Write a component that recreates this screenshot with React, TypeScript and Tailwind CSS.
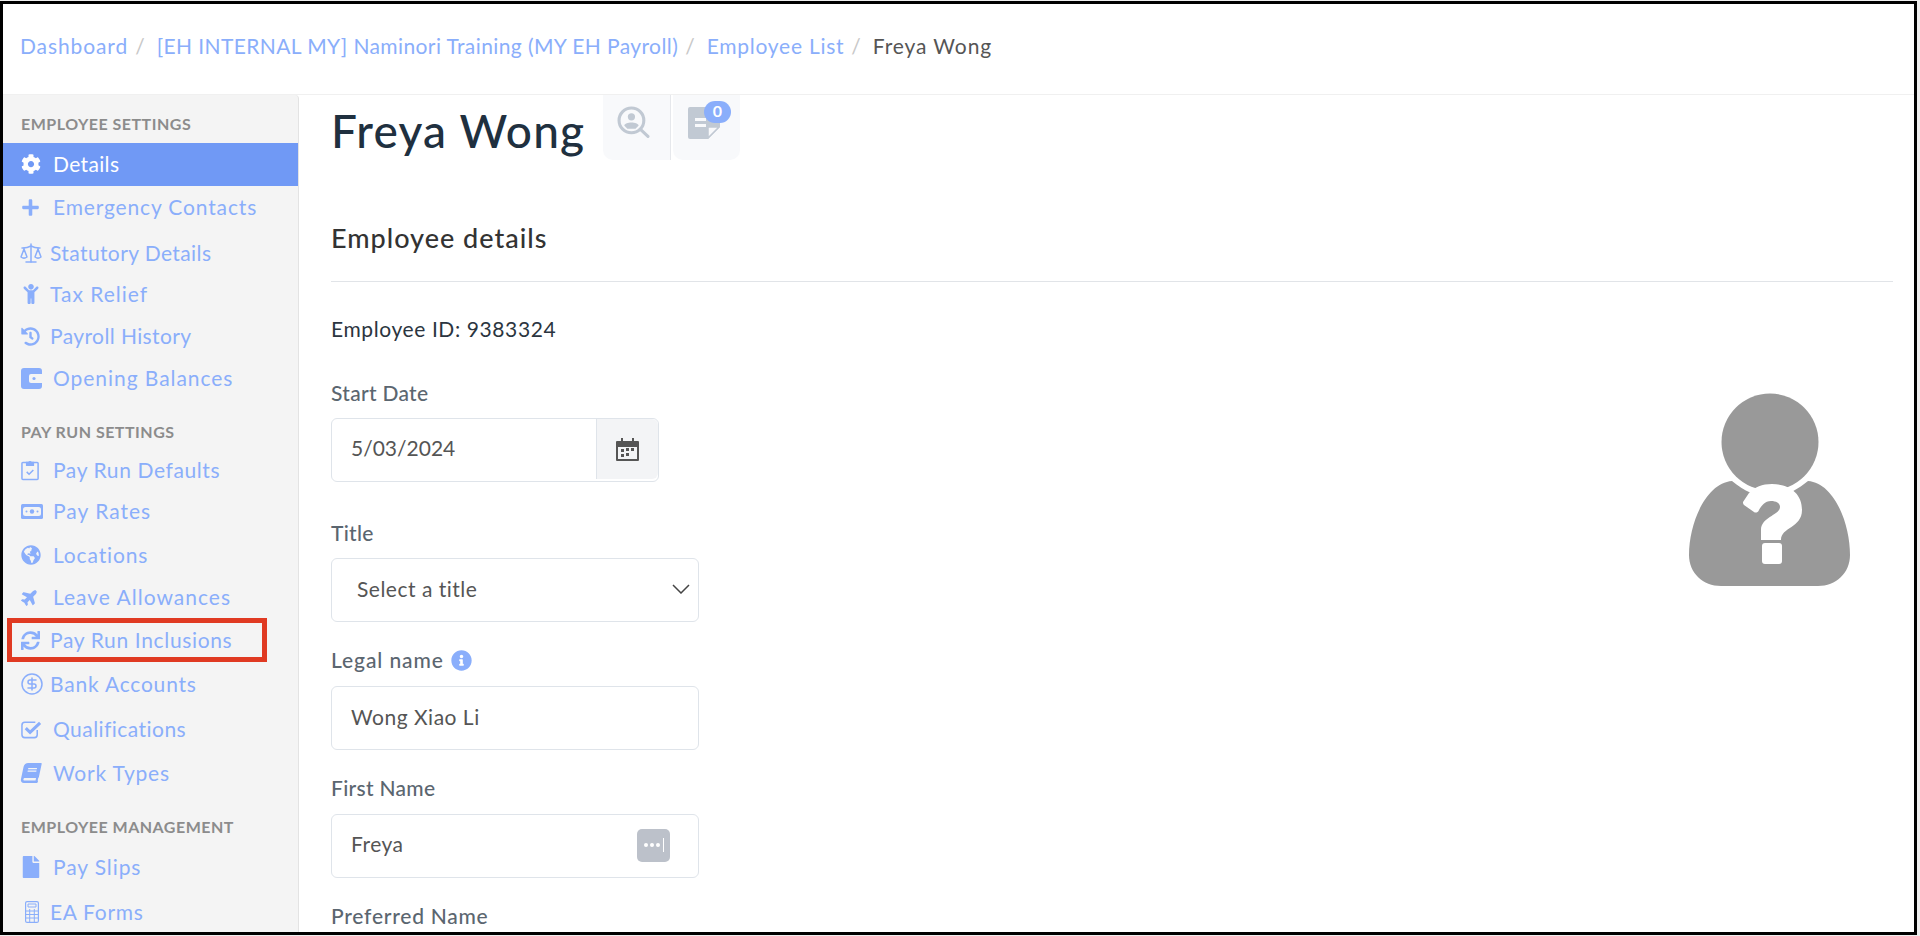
import * as React from "react"
import { FaCog, FaPlus, FaChild, FaHistory, FaGlobeAmericas, FaPlane, FaSync, FaBook, FaFile, FaInfoCircle } from "react-icons/fa"
import { CircleDollarSign, Scale } from "lucide-react"

function ClipboardIcon() {
  return (
    <svg viewBox="0 0 20 22" className="w-[19px] h-[22px]" fill="none" stroke="currentColor" strokeWidth="1.6">
      <rect x="1" y="3" width="17" height="18" rx="1" />
      <path d="M6 3h2a2 2 0 0 1 3 0h2v3H6z" fill="currentColor" />
      <path d="M6 13l2.500 2.500L13 11" />
    </svg>
  )
}

function BillIcon() {
  return (
    <svg viewBox="0 0 22 15" className="w-[22px] h-[15px]">
      <rect width="22" height="15" rx="1.500" fill="currentColor" />
      <rect x="2" y="3" width="18" height="9" rx="2.500" fill="#f4f4f4" />
      <circle cx="11" cy="7.500" r="2.200" fill="currentColor" />
      <circle cx="5.500" cy="7.500" r="1" fill="currentColor" />
      <circle cx="16.500" cy="7.500" r="1" fill="currentColor" />
    </svg>
  )
}

function WalletIcon() {
  return (
    <svg viewBox="0 0 22 21" className="w-[22px] h-[21px]">
      <rect width="21" height="21" rx="3" fill="currentColor" />
      <path d="M10 6h12v9H10a2 2 0 0 1-2-2V8a2 2 0 0 1 2-2z" fill="#f4f4f4" />
      <circle cx="13" cy="10.500" r="1.600" fill="currentColor" />
    </svg>
  )
}

function CheckIcon() {
  return (
    <svg viewBox="0 0 22 19" className="w-[21px] h-[19px]" fill="none" stroke="currentColor">
      <path d="M17 10v5a3 3 0 0 1-3 3H4a3 3 0 0 1-3-3V5a3 3 0 0 1 3-3h11" strokeWidth="1.600" />
      <path d="M5 8l4.500 4.500L20 2.500" strokeWidth="3.200" />
    </svg>
  )
}

function CalcIcon() {
  return (
    <svg viewBox="0 0 14 22" className="w-[14px] h-[22px]" fill="none" stroke="currentColor" strokeWidth="1.200">
      <rect x="0.600" y="0.600" width="12.800" height="20.800" rx="1.500" />
      <path d="M3 3h8v3H3z" strokeWidth="1" />
      <path d="M0.600 10h12.800M0.600 13.500h12.800M0.600 17h12.800M4.700 8v13M9.300 8v13" strokeWidth="1" />
    </svg>
  )
}

function CalendarIcon() {
  return (
    <svg viewBox="0 0 23 23" className="w-[23px] h-[23px] text-[#555]" fill="currentColor">
      <path d="M1 3h21a1 1 0 0 1 1 1v18a1 1 0 0 1-1 1H1a1 1 0 0 1-1-1V4a1 1 0 0 1 1-1zm1 6v12h19V9z" fillRule="evenodd" />
      <rect x="5" y="0" width="2" height="5" />
      <rect x="16" y="0" width="2" height="5" />
      <rect x="10" y="10" width="3" height="3" />
      <rect x="15" y="10" width="3" height="3" />
      <rect x="5" y="11" width="3" height="3" />
      <rect x="5" y="16" width="3" height="3" />
      <rect x="10" y="15" width="3" height="3" />
    </svg>
  )
}

interface NavItem {
  label: string
  icon: React.ReactNode
  row: string
  text: string
  active?: boolean
  marked?: boolean
}

const employeeSettings: NavItem[] = [
  { label: "Details", icon: <FaCog className="w-[20px] h-[20px]" />, row: "mt-[9px] h-[43px]", text: "ml-[12px] tracking-[0.35px]", active: true },
  { label: "Emergency Contacts", icon: <FaPlus className="w-[19px] h-[19px]" />, row: "mt-[5px] h-[34px]", text: "ml-[13px] tracking-[0.85px]" },
  { label: "Statutory Details", icon: <Scale className="w-[24px] h-[24px] -ml-[2px]" strokeWidth={1.5} />, row: "mt-[12px] h-[34px]", text: "ml-[7px] tracking-[0.4px]" },
  { label: "Tax Relief", icon: <FaChild className="w-[20px] h-[20px]" />, row: "mt-[7px] h-[34px]", text: "ml-[9px] tracking-[1px]" },
  { label: "Payroll History", icon: <FaHistory className="w-[19px] h-[19px]" />, row: "mt-[8px] h-[34px]", text: "ml-[10px] tracking-[0.4px]" },
  { label: "Opening Balances", icon: <WalletIcon />, row: "mt-[8px] h-[34px]", text: "ml-[10px] tracking-[0.95px]" },
]

const payRunSettings: NavItem[] = [
  { label: "Pay Run Defaults", icon: <ClipboardIcon />, row: "mt-[12px] h-[34px]", text: "ml-[13px] tracking-[0.6px]" },
  { label: "Pay Rates", icon: <BillIcon />, row: "mt-[7px] h-[34px]", text: "ml-[10px] tracking-[1px]" },
  { label: "Locations", icon: <FaGlobeAmericas className="w-[20px] h-[20px]" />, row: "mt-[10px] h-[34px]", text: "ml-[12px] tracking-[0.85px]" },
  { label: "Leave Allowances", icon: <FaPlane className="w-[18px] h-[18px] -rotate-45" />, row: "mt-[8px] h-[34px]", text: "ml-[14px] tracking-[1px]" },
  { label: "Pay Run Inclusions", icon: <FaSync className="w-[19px] h-[19px]" />, row: "mt-[9px] h-[34px]", text: "ml-[10px] tracking-[0.65px]", marked: true },
  { label: "Bank Accounts", icon: <CircleDollarSign className="w-[24px] h-[24px] -ml-[1px]" strokeWidth={1.5} />, row: "mt-[10px] h-[34px]", text: "ml-[6px] tracking-[0.8px]" },
  { label: "Qualifications", icon: <CheckIcon />, row: "mt-[11px] h-[34px]", text: "ml-[11px] tracking-[0.45px]" },
  { label: "Work Types", icon: <FaBook className="w-[20px] h-[20px] -skew-x-12" />, row: "mt-[10px] h-[34px]", text: "ml-[12px] tracking-[0.8px]" },
]

const employeeManagement: NavItem[] = [
  { label: "Pay Slips", icon: <FaFile className="w-[20px] h-[22px]" />, row: "mt-[14px] h-[34px]", text: "ml-[12px] tracking-[0.9px]" },
  { label: "EA Forms", icon: <span className="pl-[4px] block"><CalcIcon /></span>, row: "mt-[11px] h-[34px]", text: "ml-[11px] tracking-[0.7px]" },
]

function NavRow({ item }: { item: NavItem }) {
  return (
    <a
      className={`relative flex items-center pl-[18px] pb-[2px] text-[21px] shrink-0 ${item.row} ${
        item.active ? "bg-[#7099f5] text-white" : "text-[#8aaefb]"
      }`}
    >
      <span className="flex items-center">{item.icon}</span>
      <span className={item.text}>{item.label}</span>
      {item.marked && <span className="absolute left-[4px] top-[-6px] w-[260px] h-[44px] border-[5px] border-[#e03a22]" />}
    </a>
  )
}

function Field({ label, children, extra, spacing }: { label: string; children: React.ReactNode; extra?: React.ReactNode; spacing?: string }) {
  return (
    <div>
      <label className={`flex items-center gap-[7px] h-[24px] text-[21px] font-medium text-[#5b6670] ${spacing ?? "tracking-[0.3px]"}`}>
        {label}
        {extra}
      </label>
      {children}
    </div>
  )
}

const inputBox = "flex items-center h-[64px] pb-[2px] rounded-[6px] border border-[#dfe4ea] bg-white text-[21px] tracking-[0.5px] text-[#555]"
const sectionHead = "h-[20px] shrink-0 pl-[18px] text-[16px] leading-[20px] tracking-[0.5px] font-bold text-[#8c8c8c]"
const crumbLink = "text-[#8aaefb]"
const crumbSep = "ml-[7px] mr-[12px] text-[#c8c8c8]"

export default function App() {
  return (
    <div className="h-[936px] pt-px pr-[3px] pb-px bg-[#eeeeee]">
      <div className="h-full overflow-hidden flex flex-col border-[3px] border-black bg-white font-['Lato','Liberation_Sans',sans-serif]">
        <nav className="h-[91px] shrink-0 flex items-center pl-[17px] pb-[7px] text-[21px] border-b border-[#f0f0f0]">
          <a className={`${crumbLink} tracking-[0.9px]`}>Dashboard</a>
          <span className={crumbSep}>/</span>
          <a className={`${crumbLink} tracking-[0.4px]`}>[EH INTERNAL MY] Naminori Training (MY EH Payroll)</a>
          <span className={crumbSep}>/</span>
          <a className={`${crumbLink} tracking-[0.75px]`}>Employee List</a>
          <span className={crumbSep}>/</span>
          <span className="text-[#555] tracking-[0.9px]">Freya Wong</span>
        </nav>

        <div className="flex flex-1 min-h-0">
          <aside className="w-[296px] shrink-0 bg-[#f4f4f4] border-r border-[#e3e3e3] rounded-tr-[4px] flex flex-col overflow-hidden">
            <h4 className={`${sectionHead} mt-[19px]`}>EMPLOYEE SETTINGS</h4>
            {employeeSettings.map((item) => (
              <NavRow key={item.label} item={item} />
            ))}
            <h4 className={`${sectionHead} mt-[26px]`}>PAY RUN SETTINGS</h4>
            {payRunSettings.map((item) => (
              <NavRow key={item.label} item={item} />
            ))}
            <h4 className={`${sectionHead} mt-[26px]`}>EMPLOYEE MANAGEMENT</h4>
            {employeeManagement.map((item) => (
              <NavRow key={item.label} item={item} />
            ))}
          </aside>

          <main className="flex-1 min-w-0 pl-[32px] pr-[21px] overflow-hidden">
            <div className="flex items-start h-[65px]">
              <h1 className="w-[272px] shrink-0 text-[46px] leading-[72px] tracking-[1.2px] font-medium text-[#20303f]">Freya Wong</h1>
              <div className="flex">
                <button className="w-[68px] h-[65px] pr-[6px] flex items-center justify-center bg-[#f8f9fb] rounded-bl-[10px] border-r border-[#e6e8ec]">
                  <svg viewBox="0 0 32 32" className="w-[33px] h-[33px] -mt-[10px]" fill="none" stroke="#c1c9d3" strokeWidth="3">
                    <circle cx="14" cy="14" r="12" />
                    <circle cx="14" cy="10.500" r="3.500" fill="#c1c9d3" stroke="none" />
                    <path d="M7 19c1-4 13-4 14 0l-3 3h-8z" fill="#c1c9d3" stroke="none" />
                    <path d="M23 23l7 6.500" strokeLinecap="round" />
                  </svg>
                </button>
                <button className="relative ml-[2px] w-[67px] h-[65px] pr-[6px] flex items-center justify-center bg-[#f8f9fb] rounded-b-[10px]">
                  <svg viewBox="0 0 32 32" className="w-[32px] h-[32px] -mt-[10px]">
                    <path d="M2 0h28a2 2 0 0 1 2 2v18L20 32H2a2 2 0 0 1-2-2V2a2 2 0 0 1 2-2z" fill="#c1c9d3" />
                    <rect x="7" y="11" width="11" height="3" fill="#f8f9fb" />
                    <rect x="7" y="17" width="11" height="3" fill="#f8f9fb" />
                    <path d="M20 31V20h11z" fill="#f8f9fb" stroke="#c1c9d3" strokeWidth="1.500" />
                  </svg>
                  <span className="absolute left-[31px] top-[6px] w-[27px] h-[22px] rounded-full bg-[#8aaefb] text-white text-[16px] font-bold leading-[20px] text-center">0</span>
                </button>
              </div>
            </div>

            <h2 className="mt-[62px] h-[32px] text-[27px] leading-[32px] tracking-[1px] font-medium text-[#333]">Employee details</h2>
            <hr className="mt-[27px] border-[#e1e4e8]" />

            <div className="flex justify-between">
              <div className="w-[368px]">
                <p className="mt-[35px] h-[24px] text-[21px] leading-[24px] tracking-[0.6px] text-[#2b3540]">Employee ID: 9383324</p>

                <div className="mt-[40px]">
                  <Field label="Start Date">
                    <div className={`${inputBox} mt-[13px] w-[328px] pb-0`}>
                      <span className="flex-1 pl-[19px] pb-[2px] tracking-normal">5/03/2024</span>
                      <span className="w-[62px] h-full flex items-center justify-center bg-[#f3f4f6] border-l border-[#dfe4ea] rounded-r-[6px]">
                        <CalendarIcon />
                      </span>
                    </div>
                  </Field>
                </div>

                <div className="mt-[39px]">
                  <Field label="Title">
                    <div className={`${inputBox} mt-[13px] justify-between pl-[25px] pr-[8px]`}>
                      <span>Select a title</span>
                      <svg viewBox="0 0 18 10" className="w-[18px] h-[10px] text-[#444]" fill="none" stroke="currentColor" strokeWidth="1.500">
                        <path d="M1 1l8 8 8-8" />
                      </svg>
                    </div>
                  </Field>
                </div>

                <div className="mt-[26px]">
                  <Field label="Legal name" spacing="tracking-[0.9px]" extra={<FaInfoCircle className="w-[21px] h-[21px] text-[#8aaefb]" />}>
                    <div className={`${inputBox} mt-[14px] pl-[19px]`}>Wong Xiao Li</div>
                  </Field>
                </div>

                <div className="mt-[26px]">
                  <Field label="First Name">
                    <div className={`${inputBox} mt-[14px] justify-between pl-[19px] pr-[28px] pb-0`}>
                      <span className="pb-[2px]">Freya</span>
                      <span className="w-[33px] h-[33px] rounded-[5px] bg-[#bcc1ca] flex items-center justify-center gap-[2px]">
                        <i className="w-[4px] h-[4px] rounded-full bg-white" />
                        <i className="w-[4px] h-[4px] rounded-full bg-white" />
                        <i className="w-[4px] h-[4px] rounded-full bg-white" />
                        <i className="w-px h-[14px] bg-white ml-px" />
                      </span>
                    </div>
                  </Field>
                </div>

                <div className="mt-[26px]">
                  <Field label="Preferred Name" spacing="tracking-[0.75px]">
                    <span />
                  </Field>
                </div>
              </div>

              <svg viewBox="0 0 161 193" className="w-[161px] h-[193px] mt-[111px] mr-[43px] shrink-0">
                <circle cx="81" cy="49" r="48.500" fill="#999" />
                <path d="M43 88C55 98 68 104 81 104C94 104 107 98 119 88C145 90 161 130 161 162C161 180 147 193 129 193H32C14 193 0 180 0 162C0 130 17 90 43 88Z" fill="#999" />
                <path d="M54 109L60 100C66 94 73 91 83 91C100 91 113 100 113 117C113 135 92 134 92 147H72V137C72 124 91 122 91 114C91 110 87 108 82 108C76 108 72 113 70 117C69 120 66 120 65 119L55 112C54 111 54 110 54 109Z" fill="#fff" />
                <rect x="73" y="150" width="20" height="21" rx="3" fill="#fff" />
              </svg>
            </div>
          </main>
        </div>
      </div>
    </div>
  )
}
